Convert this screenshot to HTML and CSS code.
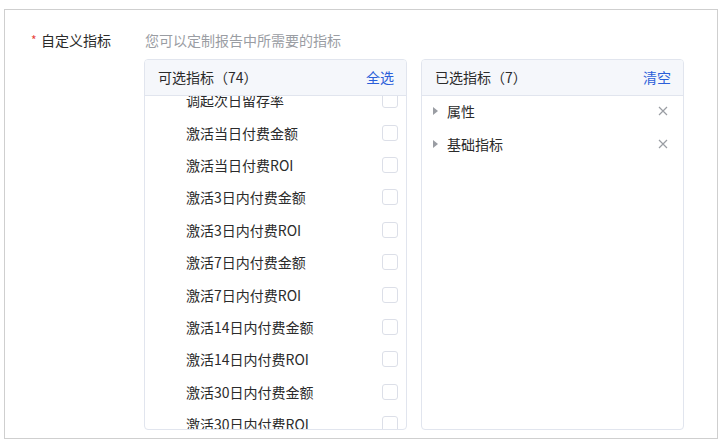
FILE: index.html
```html
<!DOCTYPE html>
<html lang="zh">
<head>
<meta charset="utf-8">
<link rel="stylesheet" href="styles.css">
</head>
<body>
<div class="frame">
  <div class="form-row">
    <div class="label"><span class="req">*</span>自定义指标</div>
    <div class="content">
      <div class="hint">您可以定制报告中所需要的指标</div>
      <div class="panels">
        <div class="panel">
          <div class="panel-head">
            <span class="title">可选指标（74）</span>
            <span class="action">全选</span>
          </div>
          <div class="panel-body">
            <ul class="list scrolled">
              <li class="opt"><span>调起次日留存率</span><i class="box"></i></li>
              <li class="opt"><span>激活当日付费金额</span><i class="box"></i></li>
              <li class="opt"><span>激活当日付费ROI</span><i class="box"></i></li>
              <li class="opt"><span>激活3日内付费金额</span><i class="box"></i></li>
              <li class="opt"><span>激活3日内付费ROI</span><i class="box"></i></li>
              <li class="opt"><span>激活7日内付费金额</span><i class="box"></i></li>
              <li class="opt"><span>激活7日内付费ROI</span><i class="box"></i></li>
              <li class="opt"><span>激活14日内付费金额</span><i class="box"></i></li>
              <li class="opt"><span>激活14日内付费ROI</span><i class="box"></i></li>
              <li class="opt"><span>激活30日内付费金额</span><i class="box"></i></li>
              <li class="opt"><span>激活30日内付费ROI</span><i class="box"></i></li>
            </ul>
          </div>
        </div>
        <div class="panel">
          <div class="panel-head">
            <span class="title">已选指标（7）</span>
            <span class="action">清空</span>
          </div>
          <div class="panel-body">
            <ul class="list selected">
              <li class="sel"><span class="arrow"></span><span class="name">属性</span><svg class="close" width="10" height="10" viewBox="0 0 10 10"><path d="M1 1L9 9M9 1L1 9" stroke="#9a9da3" stroke-width="1.2" fill="none"/></svg></li>
              <li class="sel"><span class="arrow"></span><span class="name">基础指标</span><svg class="close" width="10" height="10" viewBox="0 0 10 10"><path d="M1 1L9 9M9 1L1 9" stroke="#9a9da3" stroke-width="1.2" fill="none"/></svg></li>
            </ul>
          </div>
        </div>
      </div>
    </div>
  </div>
</div>
</body>
</html>
```

FILE: styles.css
```css
* { box-sizing: border-box; }
html, body { margin: 0; padding: 0; background: #fff; }
body {
  font-family: "Noto Sans CJK SC", "Noto Sans", sans-serif;
  font-size: 14px;
  color: #2b2b2b;
}
.frame {
  margin: 9px 0 0 4px;
  width: 714px;
  height: 430px;
  border: 1px solid #cfcfcf;
  overflow: hidden;
}
.form-row {
  display: flex;
  align-items: flex-start;
  padding-top: 20px;
}
.label {
  width: 139px;
  height: 20px;
  padding-left: 26px;
  line-height: 20px;
  display: flex;
  align-items: center;
}
.req {
  color: #e8453c;
  width: 10px;
  font-size: 12px;
  line-height: 20px;
}
.content {
  display: flex;
  flex-direction: column;
}
.hint {
  color: #9a9da3;
  line-height: 20px;
  padding-left: 1px;
}
.panels {
  display: flex;
  gap: 14px;
  margin-top: 9px;
}
.panel {
  width: 263px;
  height: 371px;
  border: 1px solid #e1e5ee;
  border-radius: 4px;
  display: flex;
  flex-direction: column;
  overflow: hidden;
}
.panel-head {
  height: 36px;
  flex: none;
  background: #f5f7fb;
  border-bottom: 1px solid #e1e5ee;
  display: flex;
  align-items: center;
  justify-content: space-between;
  padding: 0 12px 1px 13px;
}
.action { color: #2b5fd9; }
.panel-body {
  flex: 1;
  overflow: hidden;
}
.list {
  list-style: none;
  margin: 0;
  padding: 0;
}
.scrolled { margin-top: -12px; }
.selected { margin-top: -1px; }
.opt {
  height: 32.4px;
  display: flex;
  align-items: center;
  justify-content: space-between;
  padding: 0 8px 0 41px;
}
.box {
  width: 16px;
  height: 16px;
  border: 1px solid #dcdfe8;
  border-radius: 3px;
  background: #fff;
}
.sel {
  height: 32.5px;
  display: flex;
  align-items: center;
  padding: 0 15px 0 11px;
}
.arrow {
  width: 0;
  height: 0;
  border-top: 4px solid transparent;
  border-bottom: 4px solid transparent;
  border-left: 5px solid #9a9da3;
  margin-right: 9px;
}
.name { flex: 1; }
.close { display: block; }
```
